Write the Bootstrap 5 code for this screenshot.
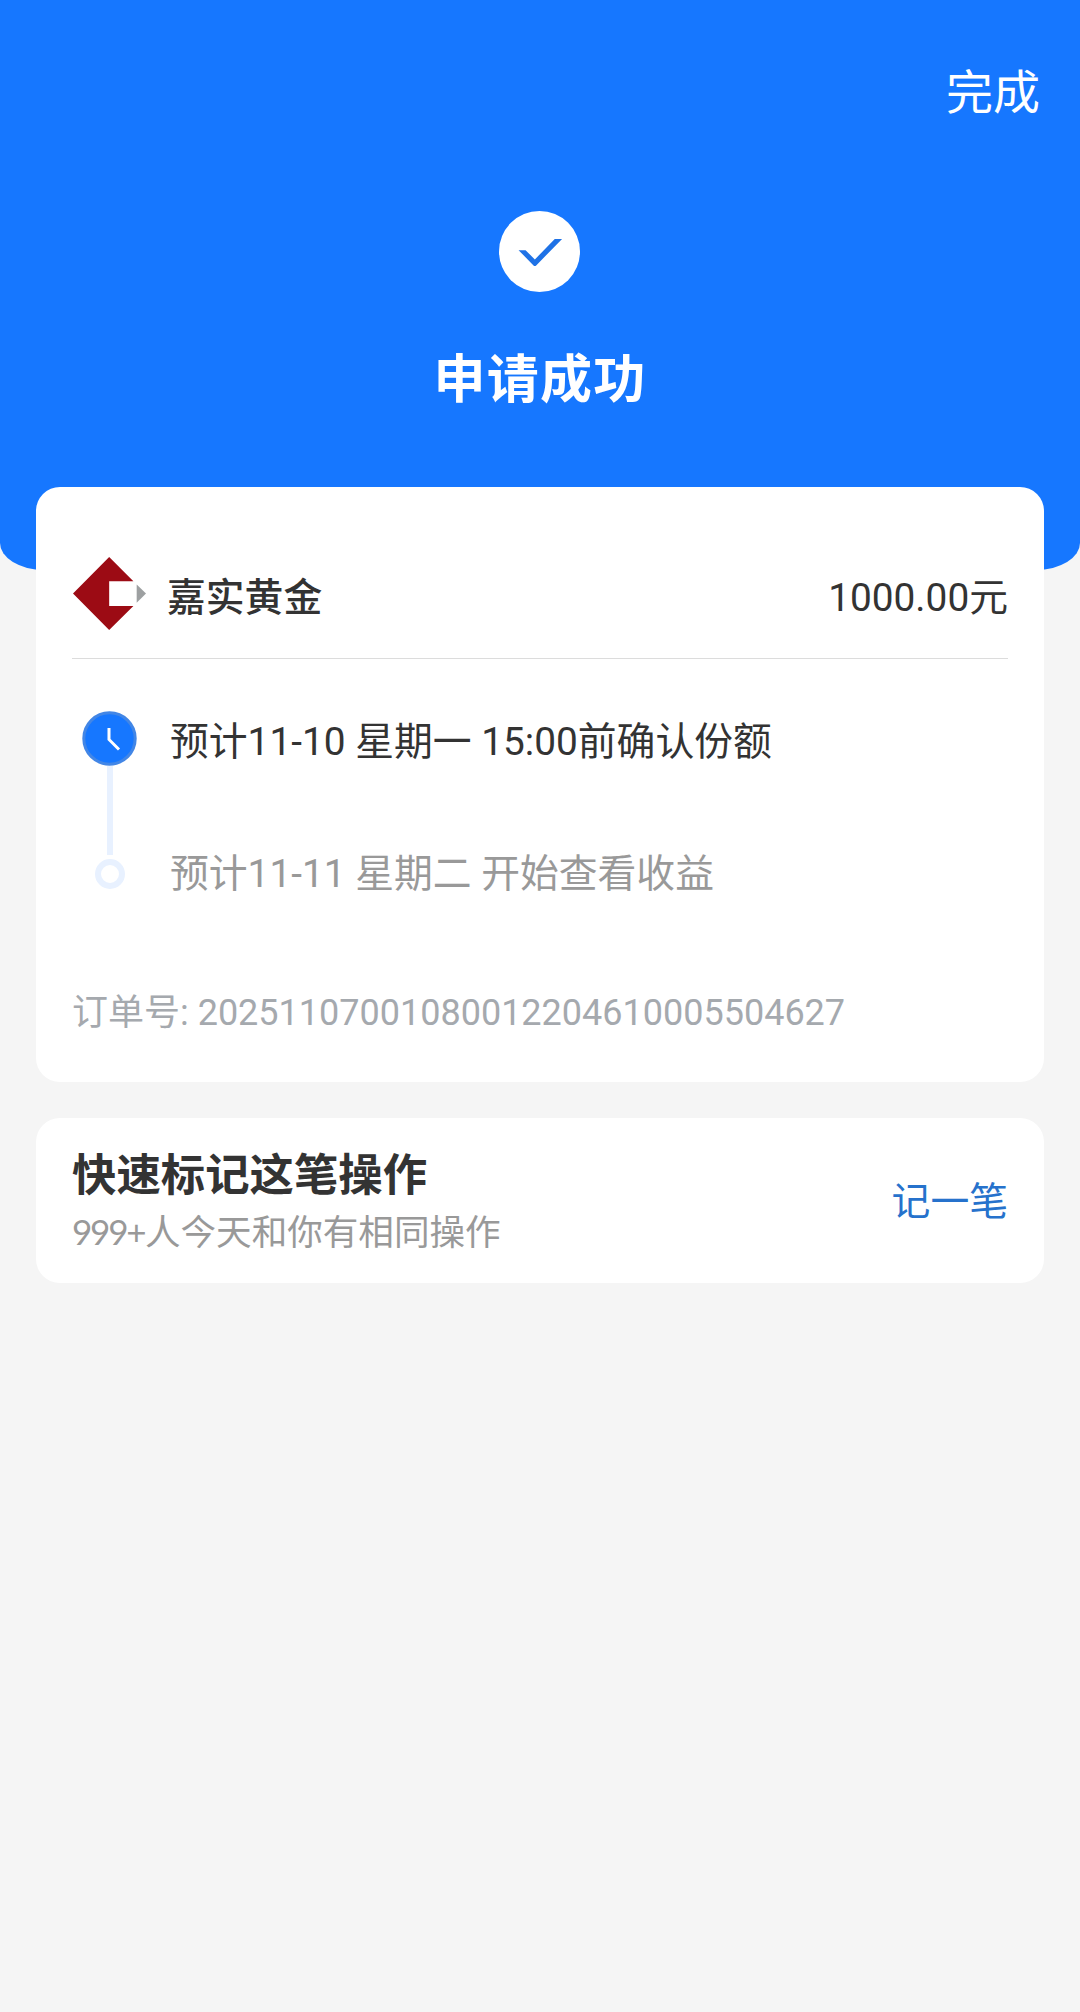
<!DOCTYPE html>
<html lang="zh-CN">
<head>
<meta charset="utf-8">
<meta name="viewport" content="width=device-width, initial-scale=1">
<title>申请成功</title>
<link href="https://cdn.jsdelivr.net/npm/bootstrap@5.3.0/dist/css/bootstrap.min.css" rel="stylesheet">
<style>
body{background:#f5f5f5;color:#333;font-family:Roboto,"Noto Sans CJK SC",sans-serif;font-size:38.8px;line-height:54px;min-height:2012px}
.hero{background:#1677ff;height:570px;border-radius:0 0 44px 44px/0 0 27px 27px;padding-top:63px}
.done-link{font-size:47px;line-height:60px;padding-right:40px}
.ok-icon{width:81px;height:81px;margin:88px 1px 0 0}
.hero-title{font-size:52px;letter-spacing:1.2px;line-height:64px;margin-top:57px}
.sheet{border-radius:24px;margin:0 36px;padding:0 36px}
.order-sheet{margin-top:-83px;height:595px}
.fund-row{height:172px;padding-top:70px;border-bottom:1px solid #dcdcdc}
.fund-logo{width:73px;height:73px;margin-left:1px}
.fund-name{font-weight:500;margin-left:21px}
.fund-text{padding-top:14px}
.steps{padding-top:52px}
.rail{width:75px}
.clock{width:55px;height:55px}
.bar{width:6px;height:89px;background:#e8f1ff}
.ring{width:30px;height:30px;border:6px solid #e8f1ff;margin-top:4px}
.step-list{margin-left:23px;padding-top:4px;gap:78px}
.muted-a{color:#999}
.order-no{font-size:36px;line-height:50px;color:#a5a9ae;margin-top:87px}
.quick{margin-top:36px;height:165px}
.quick-title{font-size:44.4px;line-height:58px;padding-top:4px}
.quick-sub{font-size:35.6px;line-height:50px;padding-top:1px}
.num{font-family:Lato,sans-serif;font-size:35px;letter-spacing:-2.2px;margin-right:.5px}
.note-link{color:#2672cc;padding-top:2px}
</style>
<script src="https://cdn.jsdelivr.net/npm/bootstrap@5.3.0/dist/js/bootstrap.bundle.min.js"></script>
</head>
<body>
<header class="hero d-flex flex-column align-items-center text-white">
  <a href="#" class="done-link align-self-end text-white text-decoration-none">完成</a>
  <svg class="ok-icon flex-shrink-0" viewBox="0 0 244 244"><circle cx="122" cy="122" r="122" fill="#fff"/><path d="M59 118H80L108 146L168 84H190L112 164Q108 168 104 164Z" fill="#1f72e6"/></svg>
  <h1 class="hero-title fw-bold mb-0">申请成功</h1>
</header>
<main>
  <section class="sheet order-sheet bg-white position-relative">
    <div class="fund-row d-flex align-items-start">
      <svg class="fund-logo flex-shrink-0" viewBox="0 0 220 220"><path d="M0 110L109 0L182 73H109V148H182L109 220Z" fill="#9c0b14"/><path d="M192 83L220 110L192 138Z" fill="#9da0a1"/></svg>
      <div class="fund-text fund-name">嘉实黄金</div>
      <div class="fund-text ms-auto">1000.00元</div>
    </div>
    <div class="steps d-flex">
      <div class="rail d-flex flex-column align-items-center">
        <svg class="clock" viewBox="0 0 55 55"><circle cx="27.5" cy="27.5" r="25.7" fill="#1677ff" stroke="#4286e6" stroke-width="3"/><path d="M27 17V28.5L37 38.5" fill="none" stroke="#fff" stroke-width="3"/></svg>
        <div class="bar"></div>
        <div class="ring rounded-circle"></div>
      </div>
      <div class="step-list d-flex flex-column">
        <div>预计11-10 星期一 15:00前确认份额</div>
        <div class="muted-a">预计11-11 星期二 开始查看收益</div>
      </div>
    </div>
    <div class="order-no">订单号: 20251107001080012204610005504627</div>
  </section>
  <section class="sheet quick bg-white d-flex align-items-center justify-content-between">
    <div>
      <h2 class="quick-title fw-bold mb-0">快速标记这笔操作</h2>
      <div class="quick-sub muted-a"><span class="num">999+</span>人今天和你有相同操作</div>
    </div>
    <a href="#" class="note-link text-decoration-none">记一笔</a>
  </section>
</main>
</body>
</html>
